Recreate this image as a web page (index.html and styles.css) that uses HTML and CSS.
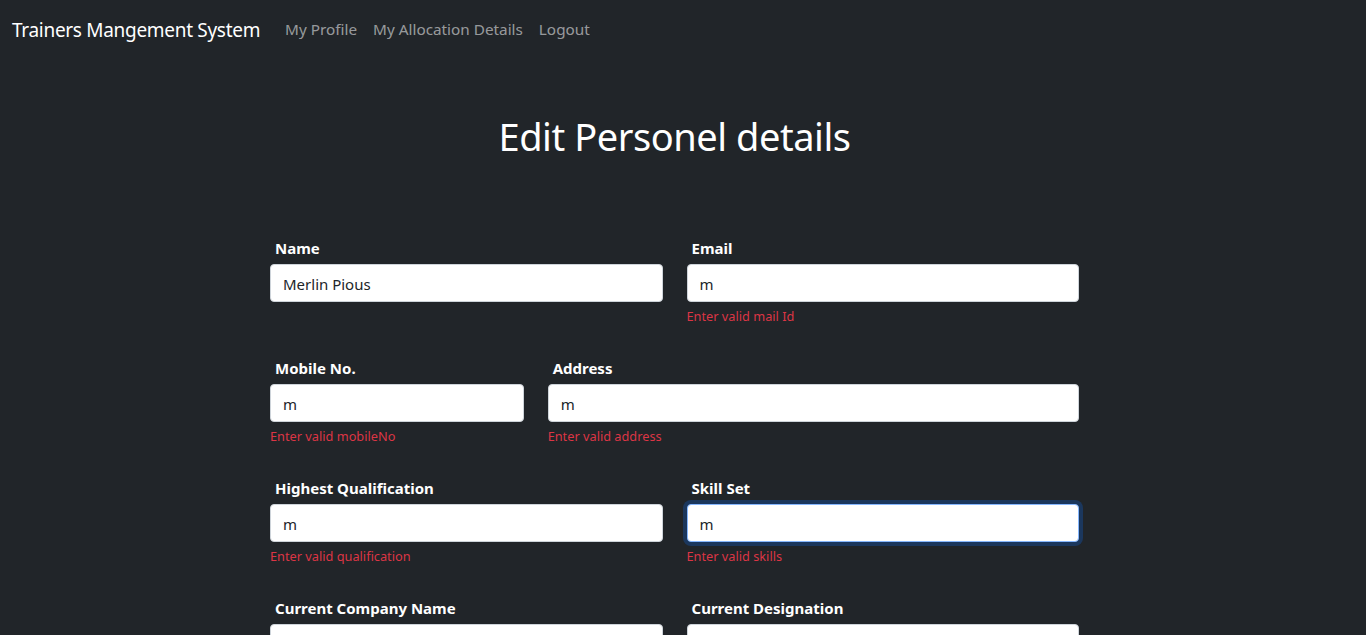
FILE: index.html
```html
<!DOCTYPE html>
<html lang="en">
<head>
<meta charset="utf-8">
<title>Trainers Mangement System</title>
<link rel="stylesheet" href="styles.css">
</head>
<body>
<nav class="navbar">
  <a class="brand" href="#">Trainers Mangement System</a>
  <ul class="nav-links">
    <li><a href="#">My Profile</a></li>
    <li><a href="#">My Allocation Details</a></li>
    <li><a href="#">Logout</a></li>
  </ul>
</nav>
<main class="page">
  <h1 class="title">Edit Personel details</h1>
  <form class="form">
    <div class="row">
      <div class="field half">
        <label class="label">Name</label>
        <input class="input" type="text" value="Merlin Pious">
        <div class="error"></div>
      </div>
      <div class="field half">
        <label class="label">Email</label>
        <input class="input" type="text" value="m">
        <div class="error">Enter valid mail Id</div>
      </div>
    </div>
    <div class="row">
      <div class="field third">
        <label class="label">Mobile No.</label>
        <input class="input" type="text" value="m">
        <div class="error">Enter valid mobileNo</div>
      </div>
      <div class="field two-third">
        <label class="label">Address</label>
        <input class="input" type="text" value="m">
        <div class="error">Enter valid address</div>
      </div>
    </div>
    <div class="row">
      <div class="field half">
        <label class="label">Highest Qualification</label>
        <input class="input" type="text" value="m">
        <div class="error">Enter valid qualification</div>
      </div>
      <div class="field half">
        <label class="label">Skill Set</label>
        <input class="input focused" type="text" value="m">
        <div class="error">Enter valid skills</div>
      </div>
    </div>
    <div class="row">
      <div class="field half">
        <label class="label">Current Company Name</label>
        <input class="input" type="text" value="">
        <div class="error"></div>
      </div>
      <div class="field half">
        <label class="label">Current Designation</label>
        <input class="input" type="text" value="">
        <div class="error"></div>
      </div>
    </div>
  </form>
</main>
</body>
</html>
```
FILE: styles.css
```css
* { box-sizing: border-box; }
html, body {
  margin: 0;
  background: #212529;
  color: #fff;
  font-family: "Noto Sans", "Open Sans", sans-serif;
  overflow: hidden;
}
.navbar {
  display: flex;
  align-items: center;
  height: 60px;
  padding: 0 12px;
}
.brand {
  color: #fff;
  text-decoration: none;
  font-size: 19px;
  letter-spacing: -0.3px;
  margin-right: 17px;
}
.nav-links {
  display: flex;
  list-style: none;
  margin: 0 0 2px;
  padding: 0;
}
.nav-links a {
  display: block;
  padding: 0 8px;
  color: rgba(255,255,255,0.55);
  text-decoration: none;
  font-size: 15.3px;
  letter-spacing: 0;
}
.page {
  padding-right: 17px;
}
.title {
  margin: 52px 0 0;
  text-align: center;
  font-weight: 400;
  font-size: 38px;
  line-height: 48px;
  letter-spacing: -0.45px;
}
.form {
  width: 833px;
  margin: 76px auto 0;
  display: flex;
  flex-direction: column;
  gap: 29px;
}
.row {
  display: flex;
}
.field {
  padding: 0 12px;
  display: flex;
  flex-direction: column;
}
.half { width: 50%; }
.third { width: 33.3333%; }
.two-third { width: 66.6667%; }
.label {
  display: block;
  padding-left: 5px;
  font-weight: 700;
  font-size: 15px;
  line-height: 24px;
  letter-spacing: 0;
}
.input {
  margin-top: 4px;
  height: 38px;
  width: 100%;
  padding: 1px 12px 0;
  font-family: inherit;
  font-size: 15px;
  color: #212529;
  background: #fff;
  border: 1px solid #ced4da;
  border-radius: 4px;
  outline: none;
}
.input.focused {
  border-color: #86b7fe;
  box-shadow: 0 0 0 4px rgba(13,110,253,0.25);
}
.error {
  margin-top: 4px;
  min-height: 21px;
  color: #dc3545;
  font-size: 12.75px;
  line-height: 21px;
  letter-spacing: 0;
}
```
